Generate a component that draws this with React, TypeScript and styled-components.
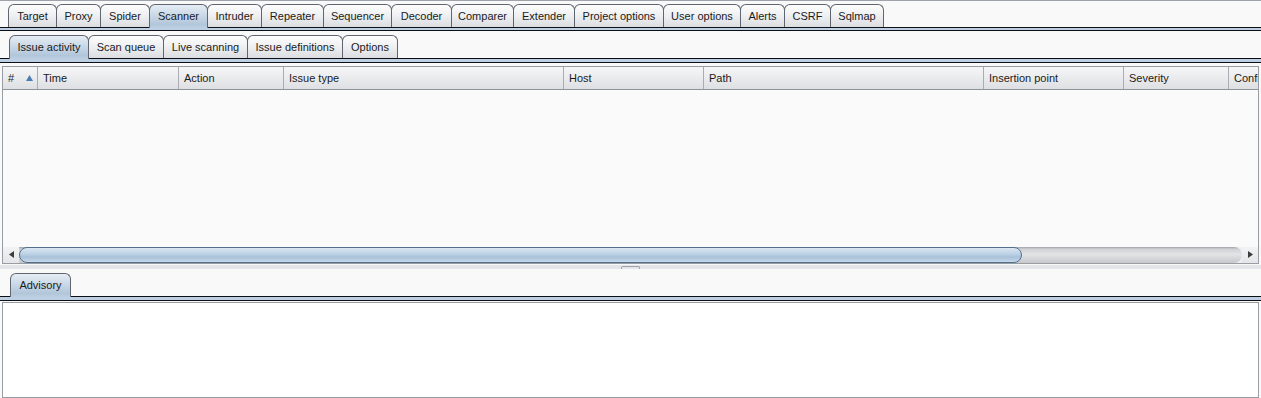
import React from 'react';
import styled, { createGlobalStyle } from 'styled-components';

const GlobalStyle = createGlobalStyle`
  html, body {
    margin: 0;
    padding: 0;
    background: #f9f9f9;
  }
  body {
    font-family: "Liberation Sans", Arial, sans-serif;
    font-size: 11px;
    color: #1b1b1b;
  }
`;

const Window = styled.div`
  display: flex;
  flex-direction: column;
  height: 398px;
  overflow: hidden;
  box-sizing: border-box;
  border-top: 1px solid #9ea2a9;
  background: #f9f9f9;
`;

const TabStrip = styled.div<{ $inset: number; $top: number }>`
  display: flex;
  align-items: flex-end;
  height: 23px;
  margin-top: ${(p) => p.$top}px;
  padding-left: ${(p) => p.$inset}px;
`;

const Tab = styled.div<{ $width: number; $active?: boolean }>`
  position: relative;
  z-index: ${(p) => (p.$active ? 1 : 0)};
  display: flex;
  align-items: center;
  justify-content: center;
  flex-shrink: 0;
  box-sizing: border-box;
  width: ${(p) => p.$width}px;
  height: ${(p) => (p.$active ? 24 : 23)}px;
  margin-left: -1px;
  margin-bottom: ${(p) => (p.$active ? -1 : 0)}px;
  padding-bottom: ${(p) => (p.$active ? 1 : 0)}px;
  border: 1px solid #60666f;
  border-bottom: none;
  border-radius: 6px 6px 0 0;
  background: ${(p) =>
    p.$active
      ? 'linear-gradient(#e6edf4 0%, #c9d8e7 45%, #b2c6da 85%, #bdd0e3 100%)'
      : 'linear-gradient(#fdfdfd 0%, #eeeff1 50%, #dcdde0 100%)'};
  white-space: nowrap;

  &:first-child {
    margin-left: 0;
  }
`;

const Rule = styled.div`
  height: 5px;
  box-sizing: border-box;
  border-top: 1px solid #0d0f14;
  border-bottom: 1px solid #0d0f14;
  background: #bdd0e3;
`;

const Frame = styled.div`
  display: flex;
  flex-direction: column;
  margin: 3px 2px 0;
  border: 1px solid #989ca3;
  background: #fafafa;
`;

const HeaderRow = styled.div`
  display: flex;
  height: 22px;
  overflow: hidden;
  border-bottom: 1px solid #8f939a;
  background: linear-gradient(#f6f6f7 0%, #e9eaec 55%, #dedfe2 100%);
`;

const HeaderCell = styled.div<{ $width: number }>`
  display: flex;
  align-items: center;
  justify-content: space-between;
  flex-shrink: 0;
  box-sizing: border-box;
  width: ${(p) => p.$width}px;
  padding: 0 4px 0 5px;
  border-right: 1px solid #a9adb3;
  white-space: nowrap;
  overflow: hidden;
`;

const TableBody = styled.div`
  height: 157px;
  background: #fafafa;
`;

const ScrollBar = styled.div`
  display: flex;
  height: 16px;
  background: #eceef0;
`;

const ArrowButton = styled.div`
  display: flex;
  align-items: center;
  justify-content: center;
  width: 16px;
  flex-shrink: 0;
  background: linear-gradient(#f2f3f4, #e4e5e8);
`;

const Track = styled.div`
  flex: 1;
  display: flex;
  border-radius: 0 9px 9px 0;
  background: linear-gradient(#9fa2a7 0, #cfd0d3 2px, #e3e4e6 45%, #c6c8cc 100%);
`;

const Thumb = styled.div`
  box-sizing: border-box;
  height: 100%;
  border: 1px solid #52708e;
  border-radius: 8px;
  background: linear-gradient(#dbe6f1 0%, #bed3e7 40%, #a8c1da 65%, #c7d8e9 100%);
`;

const Splitter = styled.div`
  display: flex;
  align-items: flex-start;
  justify-content: center;
  height: 9px;
  box-sizing: border-box;
  border-top: 1px solid #f9f9f9;
  border-bottom: 2px solid #f9f9f9;
  background: #e3e5e9;
`;

const Grip = styled.div`
  width: 19px;
  height: 3px;
  margin-top: 1px;
  box-sizing: border-box;
  border: 1px solid #9ea2a8;
  border-bottom: none;
  border-radius: 2px 2px 0 0;
`;

const AdvisoryBox = styled.div`
  height: 120px;
  margin: 1px 2px 0;
  border: 1px solid #989ca3;
  background: #ffffff;
`;

const mainTabs = [
  { label: 'Target', width: 49 },
  { label: 'Proxy', width: 45 },
  { label: 'Spider', width: 50 },
  { label: 'Scanner', width: 59, active: true },
  { label: 'Intruder', width: 55 },
  { label: 'Repeater', width: 63 },
  { label: 'Sequencer', width: 69 },
  { label: 'Decoder', width: 61 },
  { label: 'Comparer', width: 63 },
  { label: 'Extender', width: 62 },
  { label: 'Project options', width: 90 },
  { label: 'User options', width: 78 },
  { label: 'Alerts', width: 45 },
  { label: 'CSRF', width: 47 },
  { label: 'Sqlmap', width: 54 },
];

const scannerTabs = [
  { label: 'Issue activity', width: 80, active: true },
  { label: 'Scan queue', width: 76 },
  { label: 'Live scanning', width: 85 },
  { label: 'Issue definitions', width: 96 },
  { label: 'Options', width: 56 },
];

// last column is cut off by the frame, as in the real table
const columns = [
  { label: '#', width: 35, sorted: true },
  { label: 'Time', width: 141 },
  { label: 'Action', width: 105 },
  { label: 'Issue type', width: 280 },
  { label: 'Host', width: 140 },
  { label: 'Path', width: 280 },
  { label: 'Insertion point', width: 140 },
  { label: 'Severity', width: 105 },
  { label: 'Confidence', width: 140 },
];

const SortUp = () => (
  <svg width="7" height="6" viewBox="0 0 7 6">
    <path d="M3.5 0 L7 6 L0 6 Z" fill="#4a7db3" />
  </svg>
);

const Arrow = ({ dir }: { dir: 'left' | 'right' }) => (
  <svg width="5" height="7" viewBox="0 0 5 7">
    <path d={dir === 'left' ? 'M5 0 L0 3.5 L5 7 Z' : 'M0 0 L5 3.5 L0 7 Z'} fill="#3c3c3c" />
  </svg>
);

const App: React.FC = () => {
  return (
    <>
      <GlobalStyle />
      <Window>
        <TabStrip $inset={8} $top={3}>
          {mainTabs.map((t) => (
            <Tab key={t.label} $width={t.width} $active={t.active}>
              {t.label}
            </Tab>
          ))}
        </TabStrip>
        <Rule />

        <TabStrip $inset={9} $top={4}>
          {scannerTabs.map((t) => (
            <Tab key={t.label} $width={t.width} $active={t.active}>
              {t.label}
            </Tab>
          ))}
        </TabStrip>
        <Rule />

        <Frame>
          <HeaderRow>
            {columns.map((c) => (
              <HeaderCell key={c.label} $width={c.width}>
                <span>{c.label}</span>
                {c.sorted && <SortUp />}
              </HeaderCell>
            ))}
          </HeaderRow>
          <TableBody />
          <ScrollBar>
            <ArrowButton>
              <Arrow dir="left" />
            </ArrowButton>
            <Track>
              <Thumb style={{ width: '82%' }} />
            </Track>
            <ArrowButton>
              <Arrow dir="right" />
            </ArrowButton>
          </ScrollBar>
        </Frame>

        <Splitter>
          <Grip />
        </Splitter>

        <TabStrip $inset={10} $top={2}>
          <Tab $width={61} $active>
            Advisory
          </Tab>
        </TabStrip>
        <Rule />
        <AdvisoryBox />
      </Window>
    </>
  );
};

export default App;
